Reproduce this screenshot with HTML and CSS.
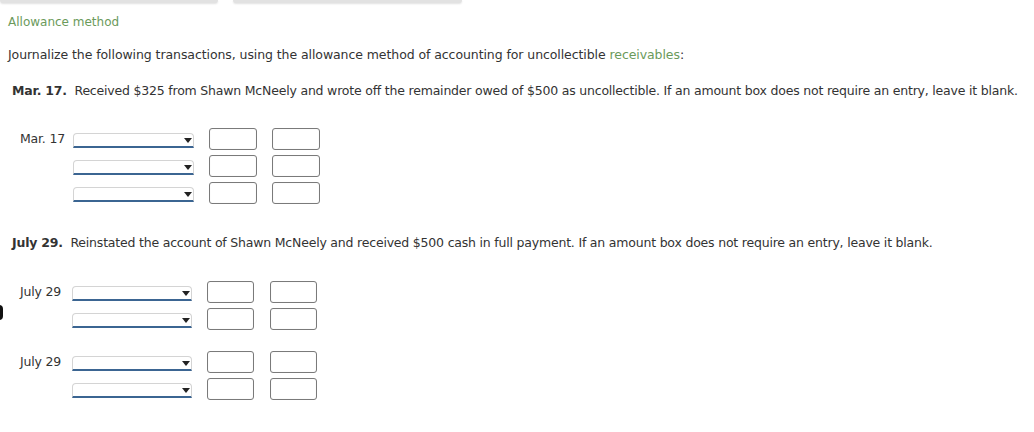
FILE: index.html
```html
<!DOCTYPE html>
<html lang="en">
<head>
    <meta charset="UTF-8">
    <title>Allowance method</title>
    <link rel="stylesheet" href="styles.css">
</head>
<body>
    <div class="tabs">
        <div class="tab first"></div>
        <div class="tab second"></div>
    </div>

    <div class="title">Allowance method</div>

    <p class="instructions">Journalize the following transactions, using the allowance method of accounting for uncollectible <span class="term">receivables</span>:</p>

    <p class="transaction"><strong>Mar. 17.</strong>&nbsp; Received $325 from Shawn McNeely and wrote off the remainder owed of $500 as uncollectible. If an amount box does not require an entry, leave it blank.</p>

    <div class="journal mar">
        <div class="date">Mar. 17</div>
        <div class="select"><span class="arrow"></span></div>
        <div class="amount"></div>
        <div class="amount"></div>

        <div class="date"></div>
        <div class="select"><span class="arrow"></span></div>
        <div class="amount"></div>
        <div class="amount"></div>

        <div class="date"></div>
        <div class="select"><span class="arrow"></span></div>
        <div class="amount"></div>
        <div class="amount"></div>
    </div>

    <p class="transaction july"><strong>July 29.</strong>&nbsp; Reinstated the account of Shawn McNeely and received $500 cash in full payment. If an amount box does not require an entry, leave it blank.</p>

    <div class="journal jul">
        <div class="date">July 29</div>
        <div class="select"><span class="arrow"></span></div>
        <div class="amount"></div>
        <div class="amount"></div>

        <div class="date"></div>
        <div class="select"><span class="arrow"></span></div>
        <div class="amount"></div>
        <div class="amount"></div>
    </div>

    <div class="journal jul second-entry">
        <div class="date">July 29</div>
        <div class="select"><span class="arrow"></span></div>
        <div class="amount"></div>
        <div class="amount"></div>

        <div class="date"></div>
        <div class="select"><span class="arrow"></span></div>
        <div class="amount"></div>
        <div class="amount"></div>
    </div>

    <div class="edge-mark"></div>
</body>
</html>
```

FILE: styles.css
```css
* {
    box-sizing: border-box;
    margin: 0;
    padding: 0;
}

body {
    font-family: Verdana, "DejaVu Sans", sans-serif;
    color: #333333;
    background-color: white;
    font-size: 12.5px;
    letter-spacing: -0.2px;
    position: relative;
    width: 1034px;
    height: 432px;
    overflow: hidden;
}

.tabs {
    display: flex;
    gap: 15px;
    height: 3px;
}

.tab {
    height: 3px;
    border-radius: 0 0 6px 6px;
    background-color: #e2e2e2;
    box-shadow: 0 1px 2px rgba(0, 0, 0, 0.12);
}

.tab.first {
    width: 218px;
}

.tab.second {
    width: 229px;
}

.title {
    color: #6b9a5b;
    font-size: 12px;
    letter-spacing: 0;
    line-height: 16px;
    padding: 11px 0 0 8px;
}

.instructions {
    line-height: 16px;
    letter-spacing: -0.08px;
    padding: 17px 0 0 8px;
}

.term {
    color: #6b9a5b;
}

.transaction {
    line-height: 16px;
    padding: 20px 0 0 12px;
    white-space: nowrap;
}

.transaction.july {
    padding-top: 31px;
}

.transaction strong {
    font-weight: bold;
}

.journal {
    display: grid;
    grid-template-columns: 53px 136px 63px 48px;
    row-gap: 5px;
    align-items: center;
    padding-left: 20px;
}

.journal.mar {
    margin-top: 29px;
}

.journal.jul {
    margin-top: 30px;
    grid-template-columns: 52px 135px 63px 47px;
}

.journal.second-entry {
    margin-top: 21px;
}

.date {
    line-height: 16px;
}

.select {
    position: relative;
    width: 121px;
    height: 15px;
    border: 1px solid #d4d4d4;
    border-bottom: 2px solid #3b6592;
    border-radius: 4px 4px 0 0;
    background-color: white;
    margin-top: 3px;
}

.journal.jul .select {
    width: 120px;
}

.arrow {
    position: absolute;
    right: 1px;
    top: 4px;
    width: 0;
    height: 0;
    border-left: 4px solid transparent;
    border-right: 4px solid transparent;
    border-top: 5px solid #222222;
}

.amount {
    width: 48px;
    height: 22px;
    border: 1px solid #7a7a7a;
    border-radius: 3px;
    box-shadow: inset 0 0 1px rgba(0, 0, 0, 0.15);
    background-color: white;
}

.journal.jul .amount {
    width: 47px;
}

.edge-mark {
    position: absolute;
    left: -2px;
    top: 305px;
    width: 5px;
    height: 15px;
    border-radius: 0 4px 4px 0;
    background-color: #111111;
}
```
